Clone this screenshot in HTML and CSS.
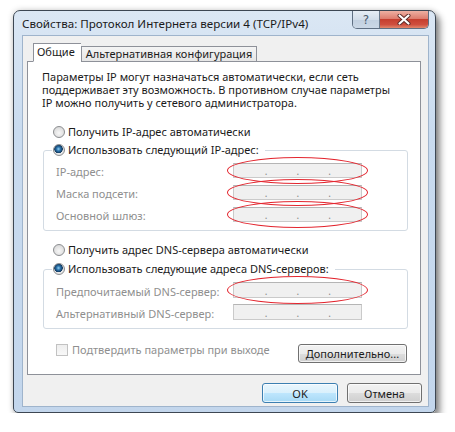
FILE: index.html
```html
<!DOCTYPE html>
<html lang="ru">
<head>
<meta charset="utf-8">
<title>Свойства: Протокол Интернета версии 4 (TCP/IPv4)</title>
<link rel="stylesheet" href="styles.css">
</head>
<body>
<div class="window">
  <div class="titlebar">
    <div class="title">Свойства: Протокол Интернета версии 4 (TCP/IPv4)</div>
    <div class="caption-btns">
      <div class="cap-btn help">?</div>
      <div class="cap-btn close">
        <svg width="14" height="11" viewBox="0 0 14 11"><path d="M2.5 1.5 L11.5 9.5 M11.5 1.5 L2.5 9.5" stroke="#5a2a26" stroke-width="4" stroke-linecap="round"/><path d="M2.5 1.5 L11.5 9.5 M11.5 1.5 L2.5 9.5" stroke="#ffffff" stroke-width="2.2" stroke-linecap="round"/></svg>
      </div>
    </div>
  </div>
  <div class="client">
    <div class="tabs">
      <div class="tab active">Общие</div>
      <div class="tab">Альтернативная конфигурация</div>
    </div>
    <div class="panel">
      <div class="intro">
        <div class="line">Параметры IP могут назначаться автоматически, если сеть</div>
        <div class="line">поддерживает эту возможность. В противном случае параметры</div>
        <div class="line">IP можно получить у сетевого администратора.</div>
      </div>

      <div class="radio-row first"><span class="radio"></span>Получить IP-адрес автоматически</div>
      <fieldset class="group ipgroup">
        <legend class="radio-row"><span class="radio checked"></span>Использовать следующий IP-адрес:</legend>
        <div class="fields">
          <span class="label">IP-адрес:</span>
          <div class="ip marked"><span></span><i>.</i><span></span><i>.</i><span></span><i>.</i><span></span></div>
          <span class="label">Маска подсети:</span>
          <div class="ip marked"><span></span><i>.</i><span></span><i>.</i><span></span><i>.</i><span></span></div>
          <span class="label">Основной шлюз:</span>
          <div class="ip marked"><span></span><i>.</i><span></span><i>.</i><span></span><i>.</i><span></span></div>
        </div>
      </fieldset>

      <div class="radio-row dns-auto"><span class="radio"></span>Получить адрес DNS-сервера автоматически</div>
      <fieldset class="group dnsgroup">
        <legend class="radio-row"><span class="radio checked"></span>Использовать следующие адреса DNS-серверов:</legend>
        <div class="fields">
          <span class="label">Предпочитаемый DNS-сервер:</span>
          <div class="ip marked"><span></span><i>.</i><span></span><i>.</i><span></span><i>.</i><span></span></div>
          <span class="label">Альтернативный DNS-сервер:</span>
          <div class="ip"><span></span><i>.</i><span></span><i>.</i><span></span><i>.</i><span></span></div>
        </div>
      </fieldset>

      <div class="confirm-row">
        <label class="check"><span class="box"></span>Подтвердить параметры при выходе</label>
        <button class="btn advanced">Дополнительно...</button>
      </div>
    </div>
    <div class="footer">
      <button class="btn default">OK</button>
      <button class="btn">Отмена</button>
    </div>
  </div>
</div>
</body>
</html>
```

FILE: styles.css
```css
html, body {
  margin: 0;
  background: #ffffff;
}

body {
  padding: 10px 0 0 13px;
  font-family: "Noto Sans", "Open Sans", sans-serif;
  font-size: 11px;
  color: #1b1b1b;
}

.window {
  box-sizing: border-box;
  width: 423px;
  height: 403px;
  border: 1px solid #3d4753;
  border-radius: 7px 7px 5px 5px;
  background: linear-gradient(#dbe7f4, #c9dbef 30%, #c3d6ec);
  box-shadow: 4px 5px 7px rgba(0, 0, 0, 0.45), 0 0 6px rgba(0, 0, 0, 0.18);
  padding: 0 6px 5px 8px;
  display: flex;
  flex-direction: column;
}

.titlebar {
  height: 24px;
  display: flex;
  align-items: flex-start;
  justify-content: space-between;
}

.title {
  align-self: center;
  font-size: 11.6px;
  color: #1a1a1a;
  margin-top: 1px;
}

.caption-btns {
  display: flex;
  border: 1px solid #5f6f82;
  border-top: none;
  border-radius: 0 0 5px 5px;
  overflow: hidden;
  height: 17px;
}

.cap-btn {
  display: flex;
  align-items: center;
  justify-content: center;
}

.help {
  width: 26px;
  background: linear-gradient(#e6edf5, #d2dde9 50%, #c2d0e0 51%, #cbd8e6);
  border-right: 1px solid #6a7a8c;
  color: #4a596c;
  font-size: 12px;
  font-family: "DejaVu Sans", sans-serif;
}

.close {
  width: 48px;
  background: linear-gradient(#eeb0a2, #dd7d6e 45%, #c63f2f 50%, #cf4f3f 80%, #e2876c);
}

.client {
  box-sizing: border-box;
  height: 372px;
  background: #f0f0f0;
  border: 1px solid #9fb4cc;
  padding: 7px 6px 0 4px;
  display: flex;
  flex-direction: column;
}

.tabs {
  display: flex;
  align-items: flex-end;
  margin-left: 6px;
  margin-bottom: -1px;
  position: relative;
  z-index: 1;
}

.tab {
  box-sizing: border-box;
  border: 1px solid #8e9199;
  padding: 0 4px;
  line-height: 14px;
  height: 16px;
  background: linear-gradient(#f4f4f4, #e6e6e6);
  color: #1b1b1b;
}

.tab.active {
  height: 19px;
  line-height: 16px;
  padding: 0 6px 0 3px;
  background: #ffffff;
  border-bottom-color: #ffffff;
  border-right: none;
}

.panel {
  box-sizing: border-box;
  width: 394px;
  height: 314px;
  background: #ffffff;
  border: 1px solid #8e9199;
  padding: 8px 0 0 0;
  display: flex;
  flex-direction: column;
}

.intro {
  margin: 0 0 0 14px;
  line-height: 13px;
}

.line {
  height: 13px;
  white-space: nowrap;
}

.radio-row {
  display: flex;
  align-items: center;
  height: 16px;
  line-height: 16px;
  white-space: nowrap;
}

.radio-row.first {
  margin: 15px 0 0 25px;
}

.radio-row.dns-auto {
  margin: 11px 0 0 25px;
}

.radio {
  box-sizing: border-box;
  width: 12px;
  height: 12px;
  border-radius: 50%;
  border: 1px solid #8b8d90;
  background: radial-gradient(circle at 50% 60%, #f7f7f7 0%, #e2e2e2 55%, #cfcfcf 100%);
  margin-right: 3px;
  flex: none;
}

.radio.checked {
  background:
    radial-gradient(circle at 45% 40%, #8fd0f2 0, #2d74ad 2px, #123a60 4px, transparent 4.5px),
    radial-gradient(circle at 50% 60%, #f2f2f2 0%, #d8d8d8 100%);
}

.group {
  margin: 2px 12px 0 15px;
  padding: 5px 12px 8px 12px;
  border: 1px solid #d3dbe3;
  border-radius: 3px;
  min-width: 0;
}

.group legend {
  margin-left: -4px;
  padding: 0 6px 0 1px;
}

.dnsgroup {
  margin-top: 3px;
}

.fields {
  display: grid;
  grid-template-columns: 177px 129px;
  grid-auto-rows: 15px;
  row-gap: 7px;
  align-items: center;
}

.dnsgroup .fields {
  grid-auto-rows: 16px;
  row-gap: 6px;
}

.label {
  color: #8f8f8f;
  line-height: 15px;
  margin-top: 2px;
  white-space: nowrap;
}

.ip {
  box-sizing: border-box;
  height: 15px;
  background: #f0f0f0;
  border: 1px solid #cacaca;
  border-top-color: #b5b5b5;
  display: flex;
  align-items: flex-end;
  padding: 0 1px;
}

.dnsgroup .ip {
  height: 16px;
}

.ip span {
  flex: 1;
}

.ip i {
  font-style: normal;
  color: #8a8a8a;
  font-size: 10px;
  line-height: 11px;
  width: 2px;
  text-align: center;
}

.ip.marked {
  position: relative;
}

.ip.marked::after {
  content: "";
  position: absolute;
  left: -7px;
  right: -7px;
  top: -7px;
  bottom: -7px;
  border: 1.5px solid #e3262f;
  border-radius: 50%;
}

.confirm-row {
  display: flex;
  justify-content: space-between;
  align-items: flex-start;
  margin: 14px 13px 0 28px;
}

.check {
  display: flex;
  align-items: center;
  color: #8f8f8f;
  height: 13px;
  line-height: 13px;
  white-space: nowrap;
}

.box {
  box-sizing: border-box;
  width: 12px;
  height: 12px;
  border: 1px solid #c2c2c2;
  background: linear-gradient(#eeeeee, #f8f8f8);
  margin-right: 4px;
}

.btn {
  box-sizing: border-box;
  font-family: inherit;
  font-size: 11px;
  color: #1b1b1b;
  height: 20px;
  padding: 0;
  border: 1px solid #707070;
  border-radius: 3px;
  background: linear-gradient(#f2f2f2 0%, #ebebeb 50%, #dddddd 51%, #cfcfcf 100%);
  box-shadow: inset 0 0 0 1px rgba(255, 255, 255, 0.7);
}

.btn.advanced {
  width: 109px;
  height: 19px;
  margin-top: 1px;
}

.footer {
  display: flex;
  justify-content: flex-end;
  gap: 9px;
  margin-top: 8px;
}

.footer .btn {
  width: 75px;
}

.footer .btn.default {
  width: 76px;
  border-color: #3c7fb1;
  background: linear-gradient(#eaf6fd 0%, #d9f0fc 50%, #bee6fd 51%, #a7d9f5 100%);
}
```
